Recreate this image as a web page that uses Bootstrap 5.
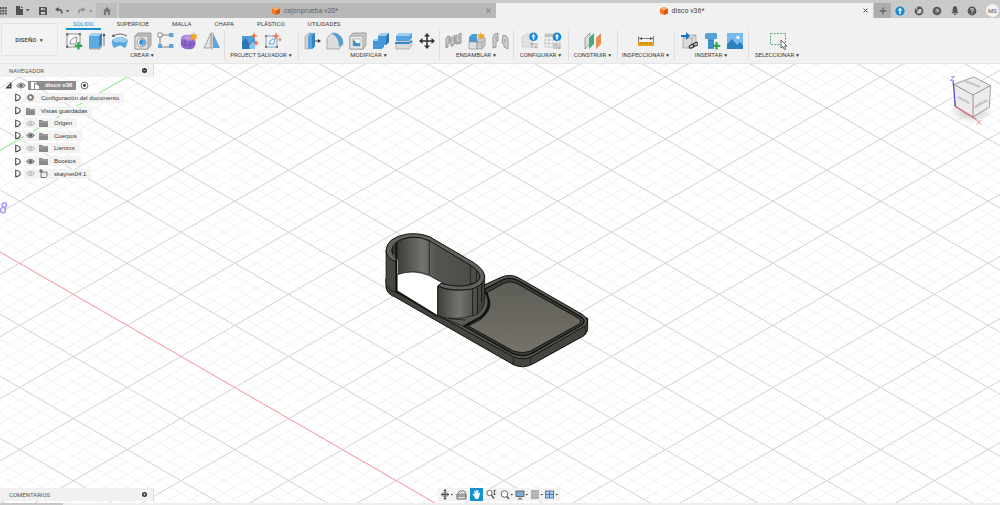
<!DOCTYPE html>
<html lang="es">
<head>
<meta charset="utf-8">
<meta name="viewport" content="width=device-width, initial-scale=1">
<title>disco v36*</title>
<link href="https://cdn.jsdelivr.net/npm/bootstrap@5.3.0/dist/css/bootstrap.min.css" rel="stylesheet">
<style>
body{font-family:Roboto,"Liberation Sans",sans-serif;font-size:6px;line-height:8px;color:#3c3c3c;background:#fff}
button{font:inherit;color:inherit;background:none;border:0;padding:0;line-height:8px}
svg{display:block;flex:none}
a{color:inherit;text-decoration:none}
.titlebar{height:18px;background:#cacaca;border-top:3px solid #c6cac9;color:#555}
.quick{width:96px;padding:0 3px 0 0}
.home-tab{width:21px;background:#bdbdbd}
.doc-tab{font-size:7px;background:#b8b8b8;color:#666;padding:0 5px}
.doc-tab.current{background:#f1f1f1;color:#444}
.docs{margin-left:2px}
.plus-tab{width:17px;background:#adadad;margin-left:1px}
.status{width:109px;padding:0 1px 0 4px}
.avatar{width:13px;height:13px;background:#f3f3f3;border-radius:50%;font-size:6px;line-height:13px;text-align:center}
.ribbon{background:#f1f1f1;height:46px;border-bottom:1px solid #e6e6e6}
.workspace{width:57px;height:33px;margin:5px 0 0 1px;border:1px solid #e2e2e2;border-radius:2px;background:#f3f3f3;font-weight:500}
.caret{font-size:5px;padding-left:1px}
.modes{height:12px;margin-left:8px}
.modes a{height:12px;padding:2px 7px 0;margin-right:9px}
.modes a.on{color:#1492d0;border-bottom:2px solid #1492d0}
.tool-group{border-right:1px solid #dedede;height:30px;padding-top:2px}
.tool-group:last-child{border:0}
.tool-row{padding-left:3px}
.w-crear{width:164px}.w-mod{width:141px}.w-trio{width:74px}.w-duo{width:55px}.w-uno{width:49px}.w-insp{width:57px}
.tools{gap:5px}
.tools svg{width:18px;height:18px}
.group-label{margin-top:1px}
.scene svg.model{position:absolute;inset:0;width:100%;height:100%}
.panel-bar{width:154px;height:13px;background:#f1f1f1;border-right:1px solid #ddd;color:#555;padding:0 6px 0 9px}
.comments{margin-bottom:2px}
.tree{height:101px;margin:2px 0 0;font-family:"Liberation Sans",Arial,sans-serif}
.tree li{flex:1;padding-left:14px}
.tree li:first-child{padding-left:4px}
.item-name{background:#f3f3f3;padding:1px 5px 1px 4px;color:#333}
.item-icons{background:#f3f3f3;height:10px;padding:0 2px;gap:4px;margin-left:2px}
.root-name{background:#8d8d8d;color:#fff;font-weight:700;padding:0 4px 0 2px;gap:5px;height:9px;margin-left:-2px}
.navtools{background:#f3f3f3;height:13px;left:50%;bottom:2px;margin-left:-62px;gap:2px;padding:0 2px}
.navtools .on{background:#1492d0}
.navtools svg{width:13px;height:13px}
.timeline{height:2px;background:#efefef}
.timeline div{width:63px;height:2px;background:#c8c8c8}
</style>
</head>
<body class="d-flex flex-column vh-100 overflow-hidden">
<header>
<div class="titlebar d-flex align-items-stretch">
  <div class="quick d-flex align-items-center justify-content-between">
    <button aria-label="Panel de datos"><svg width="7" height="9" viewBox="0 0 7 9" fill="#555"><path d="M0 1h1.6v2H0zM2.3 1h2v2h-2zM5 1h1.7v2H5zM0 3.7h1.6v2H0zM2.3 3.7h2v2h-2zM5 3.7h1.7v2H5zM0 6.4h1.6v2H0zM2.3 6.4h2v2h-2zM5 6.4h1.7v2H5z"/></svg></button>
    <button aria-label="Archivo"><svg width="15" height="9" viewBox="0 0 15 9" fill="#505050"><path d="M1 0h4v3h3v6H1zM6 0l2 2H6zM11 3h3.4l-1.7 2.4z"/></svg></button>
    <button aria-label="Guardar"><svg width="8" height="8" viewBox="0 0 8 8"><path d="M0 0h7l1 1v7H0z" fill="#555"/><path d="M2 1h4v2H2zM2 5h4v2.3H2z" fill="#ccc"/><path d="M4.4 1h1v1.6h-1z" fill="#555"/></svg></button>
    <button aria-label="Deshacer"><svg width="15" height="8" viewBox="0 0 15 8"><path d="M3.5 0v5L0 2.6z" fill="#555"/><path d="M3 2.6q4-.4 4 4" fill="none" stroke="#555" stroke-width="1.5"/><path d="M11 3h3.4l-1.7 2.4z" fill="#555"/></svg></button>
    <button aria-label="Rehacer"><svg width="15" height="8" viewBox="0 0 15 8"><path d="M4 0v5l3.5-2.4z" fill="#909090"/><path d="M4.500 2.600q-4-.4-4 4" fill="none" stroke="#909090" stroke-width="1.500"/><path d="M11 3h3.400l-1.700 2.400z" fill="#909090"/></svg></button>
  </div>
  <button class="home-tab d-flex align-items-center justify-content-center" aria-label="Inicio"><svg width="8" height="8" viewBox="0 0 8 8" fill="#777"><path d="M4 0l4 4H7v4H5V5H3v3H1V4H0z"/></svg></button>
  <div class="docs d-flex flex-fill">
    <div class="doc-tab d-flex align-items-center flex-fill w-50">
      <a href="#" class="d-flex flex-fill justify-content-center align-items-center"><svg class="me-1" width="8" height="8" viewBox="0 0 8 8"><path d="M4 0l4 1.800v4.400L4 8 0 6.200V1.800z" fill="#ef7723"/><path d="M4 0l4 1.800-4 1.800L0 1.800z" fill="#ffab6b"/><path d="M4 3.600l4-1.800v4.400L4 8z" fill="#d65b10"/></svg>cajonprueba v20*</a><button aria-label="Cerrar cajonprueba"><svg width="5" height="5" viewBox="0 0 5 5"><path d="M.5.500l4 4m0-4l-4 4" stroke="#666" stroke-width=".9"/></svg></button>
    </div>
    <div class="doc-tab current d-flex align-items-center flex-fill w-50">
      <a href="#" class="d-flex flex-fill justify-content-center align-items-center"><svg class="me-1" width="8" height="8" viewBox="0 0 8 8"><path d="M4 0l4 1.800v4.400L4 8 0 6.200V1.800z" fill="#ef7723"/><path d="M4 0l4 1.800-4 1.800L0 1.800z" fill="#ffab6b"/><path d="M4 3.600l4-1.800v4.400L4 8z" fill="#d65b10"/></svg>disco v36*</a><button aria-label="Cerrar disco"><svg width="5" height="5" viewBox="0 0 5 5"><path d="M.5.500l4 4m0-4l-4 4" stroke="#444" stroke-width=".9"/></svg></button>
    </div>
  </div>
  <button class="plus-tab d-flex align-items-center justify-content-center" aria-label="Nuevo diseño"><svg width="8" height="8" viewBox="0 0 8 8"><path d="M4 .5v7M.5 4h7" stroke="#666" stroke-width="1.400"/></svg></button>
  <div class="status d-flex align-items-center justify-content-between">
    <button aria-label="Actualizaciones"><svg width="10" height="10" viewBox="0 0 10 10"><circle cx="5" cy="5" r="4.600" fill="#1287dc"/><path d="M5 1.700l2.500 2.800H5.700v3.600H4.300V4.500H2.500z" fill="#fff"/></svg></button>
    <button aria-label="Extensiones"><svg width="10" height="10" viewBox="0 0 10 10"><circle cx="5" cy="5" r="4.400" fill="#555"/><path d="M3 5.500L5 3h2.500v3L6 7.500H3z" fill="#ccc"/><path d="M2.800 1v3" stroke="#ccc"/></svg></button>
    <button aria-label="Trabajos"><svg width="10" height="10" viewBox="0 0 10 10"><circle cx="5" cy="5" r="4.300" fill="#555"/><circle cx="5" cy="5" r="2.500" fill="#777"/><path d="M5 2.600V5h2" stroke="#ddd" fill="none"/></svg></button>
    <button aria-label="Notificaciones"><svg width="8" height="9" viewBox="0 0 8 9" fill="#555"><path d="M4 0q2.400.5 2.400 3.400V6L8 7.300H0L1.600 6V3.400Q1.600.5 4 0zM3 8h2v1H3z"/></svg></button>
    <button aria-label="Ayuda"><svg width="10" height="10" viewBox="0 0 10 10"><circle cx="5" cy="5" r="4.400" fill="#555"/><path d="M3.600 4q0-1.500 1.400-1.500T6.400 3.800Q6.400 4.600 5 5.200V6M5 6.700v1" fill="none" stroke="#ddd" stroke-width="1.100"/></svg></button>
    <button class="avatar">MS</button>
  </div>
</div>
<div class="ribbon d-flex">
  <button class="workspace">DISEÑO <span class="caret">▼</span></button>
  <div class="d-flex flex-column">
    <nav class="modes d-flex" aria-label="Modos">
      <a href="#" class="on">SOLIDO</a><a href="#">SUPERFICIE</a><a href="#">MALLA</a><a href="#">CHAPA</a><a href="#">PLÁSTICO</a><a href="#">UTILIDADES</a>
    </nav>
    <div class="tool-row d-flex">
      <div class="tool-group w-crear d-flex flex-column align-items-center">
        <div class="tools d-flex">
          <button aria-label="Crear boceto"><svg viewBox="0 0 18 18"><path d="M2 2h13v13H2zM5 12Q5 6 12 5l-1 7z" fill="#f8f8f8" stroke="#666" stroke-width=".7"/><path d="M1 1h2.500v2.500H1zM13.500 1H16v2.500h-2.500zM1 13.500h2.500V16H1z" fill="#777"/><path d="M13.500 10v7.500M9.800 13.800h7.500" stroke="#2ea84a" stroke-width="2.200"/></svg></button>
          <button aria-label="Extrusión"><svg viewBox="0 0 18 18"><path d="M1 4l3-3h10v12l-3 3H1z" fill="#61a9e1"/><path d="M1 4l3-3h10l-3 3z" fill="#a3d2f5"/><path d="M11 4l3-3v12l-3 3z" fill="#3985c2"/><path d="M1 16h10l3-3v2l-2 2.500H1z" fill="#aaa"/><path d="M16 14V3" stroke="#555" stroke-width=".8"/><path d="M14.500 4L16 1l1.500 3z" fill="#444"/></svg></button>
          <button aria-label="Revolución"><svg viewBox="0 0 18 18"><path d="M1 8q8-6 16 0l-2 7q-2 2-4-1-2-1-4 0l-4 2q-2-2-2-8z" fill="#57a5df"/><path d="M1 8q8-6 16 0l-4 3q-4-2-8 0z" fill="#9acdf1"/><path d="M2 4q7-4 14 0" fill="none" stroke="#555" stroke-width=".9"/><path d="M1 5l1-3 2 2.500z" fill="#444"/></svg></button>
          <button aria-label="Agujero"><svg viewBox="0 0 18 18"><path d="M1 4l3-3h13v12l-3 4H1z" fill="#bfbfbf" stroke="#777" stroke-width=".6"/><path d="M1 4h13v13H1z" fill="#dedede" stroke="#888" stroke-width=".6"/><circle cx="7.500" cy="10.500" r="4.300" fill="#fff" stroke="#777" stroke-width=".7"/><circle cx="8.500" cy="10.500" r="3.200" fill="#65ace2"/><path d="M8.500 7.300v3.200L6.200 12.800A3.200 3.200 0 018.500 7.300z" fill="#3c8ccc"/></svg></button>
          <button aria-label="Patrón"><svg viewBox="0 0 18 18"><path d="M3 3h12M3 3v12h12" fill="none" stroke="#666" stroke-width=".8"/><path d="M1 1h4v4H1z" fill="#fff" stroke="#777" stroke-width=".8"/><path d="M12 1h4.500v4H12zM1 12h4v4H1zM12 12h4.500v4H12z" fill="#5ba6de"/></svg></button>
          <button aria-label="Forma libre"><svg viewBox="0 0 18 18"><path d="M1 8q0-4 4-5 7-1 10 3 2 9-3 11-6 1-9-1-3-2-2-8z" fill="#8f67cc"/><path d="M1.500 7l4-4q6 0 9 3l-4 3z" fill="#b897e8"/><path d="M10 9v8M5 7v8M1 11q6 4 14 0" stroke="#6b45a9" stroke-width=".6" fill="none"/><path d="M13.500 0l1 2.700L17.500 2 16 4.500l2 1.800-2.900.3-.8 2.900-1.500-2.600-3 .3 1.900-2.400L10 2l2.700.5z" fill="#f1a51c"/></svg></button>
          <button aria-label="Simetría"><svg viewBox="0 0 18 18"><path d="M8 1v15H1z" fill="#e2e2e2" stroke="#777" stroke-width=".6"/><path d="M10 1v15h7z" fill="#5aa7e0"/><path d="M9 0v18" stroke="#777" stroke-width=".6"/></svg></button>
        </div>
        <button class="group-label">CREAR<span class="caret">▼</span></button>
      </div>
      <div class="tool-group w-trio d-flex flex-column align-items-center">
        <div class="tools d-flex">
          <button aria-label="Salvador imagen"><svg viewBox="0 0 18 18"><path d="M1 4h13v13H1z" fill="#4a9ddb"/><path d="M1 10l4-4 6 11H1z" fill="#2a77b5"/><path d="M8 14l4-4 2 2v5H9z" fill="#8bc6ee"/><path d="M13 0l1 3 3 1-3 1-1 3-1-3-3-1 3-1zM15 8l1 2 2 1-2 1-1 2-1-2-2-1 2-1z" fill="#f1734e"/></svg></button>
          <button aria-label="Salvador boceto"><svg viewBox="0 0 18 18"><path d="M2 4h11v11H2zM5 12q0-4 6-6l-1 6z" fill="none" stroke="#5195cd" stroke-width=".8"/><path d="M1 3h2v2H1zM1 14h2v2H1zM12 14h2v2h-2z" fill="#777"/><path d="M12 0l1 3 3 1-3 1-1 3-1-3-3-1 3-1zM16 5l.6 2 1.400.7-1.400.8L16 10l-.7-1.500-1.500-.8 1.500-.7z" fill="#f1734e"/></svg></button>
        </div>
        <button class="group-label">PROJECT SALVADOR<span class="caret">▼</span></button>
      </div>
      <div class="tool-group w-mod d-flex flex-column align-items-center">
        <div class="tools d-flex">
          <button aria-label="Pulsar/tirar"><svg viewBox="0 0 18 18"><path d="M2 4l4-3h2v14l-3 2H2z" fill="#d4d4d4" stroke="#888" stroke-width=".5"/><path d="M5 4l3-3h4v13l-3 3H5z" fill="#57a5df"/><path d="M9 4l3-3v13l-3 3z" fill="#3582bd"/><path d="M12 9h4" stroke="#444"/><path d="M15 7l3 2-3 2z" fill="#333"/></svg></button>
          <button aria-label="Empalme"><svg viewBox="0 0 18 18"><path d="M1 6l5-5h3q8 2 8 11l-4 5H1z" fill="#ddd" stroke="#888" stroke-width=".6"/><path d="M6 2l3-1q8 2 8 11l-4 3Q13 5 6 2z" fill="#519fd9"/></svg></button>
          <button aria-label="Vaciado"><svg viewBox="0 0 18 18"><path d="M1 4l3-3h13v12l-3 4H1z" fill="#cacaca" stroke="#777" stroke-width=".6"/><path d="M1 4h13v13H1z" fill="#e6e6e6" stroke="#888" stroke-width=".6"/><path d="M4 7h7v7H4z" fill="#fff" stroke="#888" stroke-width=".5"/><path d="M4 7l3 3v1h4v3H4z" fill="#4295d5"/></svg></button>
          <button aria-label="Combinar"><svg viewBox="0 0 18 18"><path d="M6 4l3-3h8v9l-3 3h-2v2l-2 2H1V9l2-2h3z" fill="#4697d5"/><path d="M6 4l3-3h8l-3 3zM1 9l2-2h3v2z" fill="#9ccff3"/><path d="M14 4l3-3v9l-3 3z" fill="#3079b4"/></svg></button>
          <button aria-label="Dividir cuerpo"><svg viewBox="0 0 18 18"><path d="M1 4l3-3h13v5l-3 3H1z" fill="#55a4df"/><path d="M1 4l3-3h13l-3 3z" fill="#9ccff3"/><path d="M1 11l3-2h13v4l-3 4H1z" fill="#dadada" stroke="#888" stroke-width=".5"/><path d="M0 10h14l3-2v2l-3 2H0z" fill="#318acb"/></svg></button>
          <button aria-label="Mover"><svg viewBox="0 0 18 18"><path d="M9 3v12M3 9h12" stroke="#333" stroke-width="1.500"/><path d="M9 1l3 3.500H6zM9 17l3-3.500H6zM1 9l3.500-3v6zM17 9l-3.500-3v6z" fill="#333"/></svg></button>
        </div>
        <button class="group-label">MODIFICAR<span class="caret">▼</span></button>
      </div>
      <div class="tool-group w-trio d-flex flex-column align-items-center">
        <div class="tools d-flex">
          <button aria-label="Nuevo componente"><svg viewBox="0 0 18 18"><g fill="#cecece" stroke="#777" stroke-width=".7"><path d="M1 16V7q0-3 4-3v7H3v4zM6 14V6l4-3v9H8v2zM11 12V4l5-3v10l-2 1v-3l-1 1v2z"/><path d="M4 6v3M9 6v4M14 4v4"/></g></svg></button>
          <button aria-label="Unión"><svg viewBox="0 0 18 18"><path d="M1 5l3-3h5v14H1z" fill="#4b9bd6"/><path d="M1 10h8v7H1z" fill="#e1e1e1" stroke="#888" stroke-width=".6"/><path d="M9 8l3-2h5v8l-3 3H9z" fill="#ccc" stroke="#888" stroke-width=".6"/><path d="M9 10h5v7M14 10l3-2" fill="none" stroke="#888" stroke-width=".6"/><path d="M13 0l1 2.400L17 2l-1.500 2L17 6l-2.500-.2L13 8l-1-2.400L9 6l1.600-2L9 2l3 .4z" fill="#f0a51f"/></svg></button>
          <button aria-label="Unión según construcción"><svg viewBox="0 0 18 18"><path d="M2 16V5q1-4 5-4v8H5v6zM17 17V7q-1-4-5-4l-1 8 2 1v3z" fill="#d3d3d3" stroke="#777" stroke-width=".7"/><path d="M5 4v4M14 7v4" stroke="#888" stroke-width=".8"/></svg></button>
        </div>
        <button class="group-label">ENSAMBLAR<span class="caret">▼</span></button>
      </div>
      <div class="tool-group w-duo d-flex flex-column align-items-center">
        <div class="tools d-flex">
          <button aria-label="Configurar diseño"><svg viewBox="0 0 18 18"><path d="M1 5l4-3h6v13H1z" fill="#e2e2e2" stroke="#c4c4c4" stroke-width=".6"/><path d="M9 12h8M10 15h7M11 10.500v3M15 13.500v3" stroke="#999" stroke-width=".8"/><circle cx="12.500" cy="4.700" r="4.300" fill="#1686d7"/><path d="M12.500 1.700l2.200 2.700h-1.400v3h-1.600v-3h-1.400z" fill="#fff"/></svg></button>
          <button aria-label="Tabla de configuración"><svg viewBox="0 0 18 18"><path d="M1 2h15v13H1z" fill="#f3f3f3" stroke="#bbb" stroke-width=".7"/><path d="M1 2h15v3H1z" fill="#c1c1c1"/><path d="M1 8h15M1 11.500h15M5 5v10M9 5v10M12.500 5v10" stroke="#bbb" stroke-width=".6"/><path d="M9 13h8M11 11.500v3M9 16h8M15 14.500v3" stroke="#999" stroke-width=".8"/><circle cx="13" cy="4.700" r="4.300" fill="#1686d7"/><path d="M13 1.700l2.200 2.700h-1.400v3h-1.600v-3h-1.400z" fill="#fff"/></svg></button>
        </div>
        <button class="group-label">CONFIGURAR<span class="caret">▼</span></button>
      </div>
      <div class="tool-group w-uno d-flex flex-column align-items-center">
        <div class="tools d-flex"><button aria-label="Plano de desfase"><svg viewBox="0 0 18 18"><path d="M1 6l5-5v11l-5 5z" fill="#ddd" stroke="#777" stroke-width=".6"/><path d="M5 6l5-5v11l-5 5z" fill="#3eb276"/><path d="M12 6l5-5v11l-5 5z" fill="#e58f52"/></svg></button></div>
        <button class="group-label">CONSTRUIR<span class="caret">▼</span></button>
      </div>
      <div class="tool-group w-insp d-flex flex-column align-items-center">
        <div class="tools d-flex"><button aria-label="Medir"><svg viewBox="0 0 18 18"><path d="M1.500 4v6M16.500 4v6M2 6.500h14" stroke="#666" stroke-width=".8"/><path d="M2 6.500l3-1.500v3zM16 6.500L13 5v3z" fill="#555"/><path d="M1 10h16v4H1z" fill="#e9a21c"/><path d="M4 10v2M7 10v2M10 10v2M13 10v2" stroke="#8c5b08" stroke-width=".6"/></svg></button></div>
        <button class="group-label">INSPECCIONAR<span class="caret">▼</span></button>
      </div>
      <div class="tool-group w-trio d-flex flex-column align-items-center">
        <div class="tools d-flex">
          <button aria-label="Insertar derivado"><svg viewBox="0 0 18 18"><path d="M3 6l4-3h9v10l-3 3H3z" fill="#dcdcdc" stroke="#888" stroke-width=".6"/><path d="M3 6h9v10M12 6l4-3" fill="none" stroke="#999" stroke-width=".6"/><path d="M1 4h6" stroke="#1976bd" stroke-width="2"/><path d="M6 0l4 4-4 4z" fill="#1976bd"/><g fill="none" stroke="#333" stroke-width="1.200"><rect x="9" y="13" width="5" height="3" rx="1.500" transform="rotate(-25 11 14)"/><rect x="13" y="11" width="5" height="3" rx="1.500" transform="rotate(-25 15 12)"/></g></svg></button>
          <button aria-label="Insertar elemento"><svg viewBox="0 0 18 18"><path d="M2 2l2-1h9l1 1v5H2z" fill="#56a3dc"/><path d="M5 7h6v10H5z" fill="#4b98d3"/><path d="M5 9h6M5 12h6M5 15h6" stroke="#2471ad" stroke-width=".8"/><path d="M13.500 10v7.500M9.800 13.800h7.500" stroke="#2ea84a" stroke-width="2.200"/></svg></button>
          <button aria-label="Insertar imagen"><svg viewBox="0 0 18 18"><path d="M1 1h16v16H1z" fill="#78bbec"/><circle cx="12" cy="5.500" r="1.700" fill="#fff"/><path d="M1 12l5-5 5 6 3-3 3 3v4H1z" fill="#2d7fbf"/></svg></button>
        </div>
        <button class="group-label">INSERTAR<span class="caret">▼</span></button>
      </div>
      <div class="tool-group w-insp d-flex flex-column align-items-center">
        <div class="tools d-flex"><button aria-label="Seleccionar"><svg viewBox="0 0 18 18"><path d="M1.500 1.500h15v11h-15z" fill="none" stroke="#39a66b" stroke-dasharray="2 1.200" stroke-width=".9"/><path d="M12 8v8l2-1.500 1.300 3 1.500-.8-1.300-2.700H18z" fill="#fff" stroke="#444" stroke-width=".8"/></svg></button></div>
        <button class="group-label">SELECCIONAR<span class="caret">▼</span></button>
      </div>
    </div>
  </div>
</div>
</header>

<main class="scene position-relative flex-fill d-flex flex-column justify-content-between">
<svg class="model" viewBox="0 64 1000 439" preserveAspectRatio="xMidYMid slice">
  <defs>
    <linearGradient id="wall" x2="1" y2="0"><stop offset="0" stop-color="#3e3e3a"/><stop offset=".45" stop-color="#75746e"/><stop offset="1" stop-color="#3b3b37"/></linearGradient>
    <linearGradient id="inner" x2="1" y2="0"><stop offset="0" stop-color="#30302d"/><stop offset=".35" stop-color="#74736d"/><stop offset=".5" stop-color="#555550"/><stop offset="1" stop-color="#4b4b46"/></linearGradient>
    <linearGradient id="floor" x2="0" y2="1"><stop offset="0" stop-color="#5d5c56"/><stop offset="1" stop-color="#75736a"/></linearGradient>
    <radialGradient id="shade"><stop offset="0" stop-color="#999" stop-opacity=".6"/><stop offset="1" stop-color="#999" stop-opacity="0"/></radialGradient>
  </defs>
  <path id="minor" fill="none" stroke="#f1f1f1" stroke-width=".9"/>
  <path id="major" fill="none" stroke="#d0d0d0" stroke-width=".9"/>
  <path d="M0 252l435 251" stroke="#ff9fa6" stroke-width="1"/>
  <path d="M0 150.300L127 77" stroke="#93f093" stroke-width="1"/>
  <g fill="none" stroke="#a78df0" stroke-width="1.300"><circle cx="4.300" cy="205" r="2.300"/><circle cx="3" cy="210.300" r="2.600"/></g>
  <g transform="translate(370 220) scale(.3333)" stroke="#111" stroke-width="3" stroke-linejoin="round">
    <path d="M48 175V200Q50 222 75 231L430 434Q460 448 490 431L642 347Q653 338 653 325V295L300 180z" fill="#45453f"/>
    <path d="M48 178Q50 205 75 215L430 410Q460 423 487 409L644 319Q662 303 640 285L445 173Q418 160 393 172L200 260z" fill="#5a5953"/>
    <path d="M430 411V434M482 412V433M646 318V344" fill="none" stroke-width="2"/>
    <path d="M281 318L430 402Q460 413 485 401L636 315Q650 303 634 291L443 181Q418 170 397 180L343 208Q372 260 330 292z" fill="#3d3d38" stroke-width="4"/>
    <path d="M294 318L432 394Q458 403 480 394L626 313Q638 304 626 295L438 189Q418 181 401 190L352 217Q366 265 334 297z" fill="url(#floor)" stroke-width="3"/>
    <path d="M338 210Q362 232 358 258Q352 285 322 297L281 320" fill="none" stroke-width="5"/>
    <path d="M65 95Q70 58 125 50Q155 49 178 61L300 132Q332 154 330 178Q300 204 240 202L178 166Q130 145 85 165V120z" fill="url(#inner)" stroke-width="2"/>
    <path d="M81 164Q130 147 178 167L220 190L203 200V289L81 214z" fill="#fff" stroke-width="2"/>
    <path d="M81 214L203 289" stroke-width="5"/>
    <path d="M178 62V164M301 134V193M319 150V190" fill="none" stroke-width="2"/>
    <path d="M48 92V190Q50 208 79 218V117Q62 106 65 90z" fill="#474742" stroke-width="2"/>
    <path d="M79 60V218" stroke-width="6"/>
    <path d="M203 200Q275 225 325 192L344 165V240Q342 272 315 285Q258 304 203 288z" fill="url(#wall)" stroke-width="2"/>
    <path d="M48 92Q50 52 112 42Q150 38 180 51L310 127Q345 150 344 172Q340 200 300 208Q245 216 203 198L213 190Q265 205 306 193Q331 184 330 168Q325 149 300 135L178 62Q150 49 120 52Q70 58 65 90Q65 106 80 118L75 124Q50 115 48 92z" fill="#62615b" stroke-width="3"/>
    <path d="M308 208V287M323 204V283M335 190V246" fill="none" stroke-width="2.500"/>
    <path d="M203 289Q220 294 280 318M235 296L285 300" fill="none" stroke-width="2"/>
  </g>
  <g stroke-linejoin="round">
    <ellipse cx="971" cy="112" rx="22" ry="11" fill="url(#shade)"/>
    <path d="M954 84.500l19.500-7.500 17 8.500-1 21.500-16.500 10-18.500-11z" fill="#ececec" stroke="#888" stroke-width=".8"/>
    <path d="M954 84.500l19 10.500 17.500-9.500M973 95v22" fill="none" stroke="#888" stroke-width=".9"/>
    <path d="M955.500 106.500L953 81" stroke="#5555e8" stroke-width="1.200"/>
    <path d="M955.500 106.500l21 13" stroke="#e06470" stroke-width="1.300"/>
    <g font-size="3" font-weight="700" fill="#999" font-family="Liberation Sans, sans-serif"><text x="965" y="82" transform="rotate(22 965 82)">SUPERIOR</text><text x="957" y="98" transform="rotate(27 957 98)">FRONTAL</text><text x="975" y="108" transform="rotate(-29 975 108)">DERECHA</text></g>
    <g font-size="8" font-family="Liberation Sans, sans-serif"><text x="950" y="81" fill="#7575ee">Z</text><text x="976" y="125" fill="#ee7580">X</text></g>
  </g>
</svg>

<section class="position-relative" aria-label="Navegador">
  <div class="panel-bar d-flex align-items-center justify-content-between"><span>NAVEGADOR</span><button aria-label="Ocultar"><svg width="5" height="5" viewBox="0 0 5 5"><circle cx="2.500" cy="2.500" r="2.500" fill="#333"/><path d="M1.300 2.500h2.400" stroke="#ddd" stroke-width=".7"/></svg></button></div>
  <ul class="tree list-unstyled d-flex flex-column" id="tree">
    <li class="d-flex align-items-center gap-1"><svg width="8" height="8" viewBox="0 0 8 8"><path d="M7.500 1v6.500H1z" fill="#444"/><path d="M6 4.500V6H4.500z" fill="#ddd"/></svg><svg width="10" height="7" viewBox="0 0 10 7"><path d="M.5 3.500q4.500-5 9 0-4.500 5-9 0z" fill="#bbb" stroke="#888"/><circle cx="5" cy="3.500" r="1.500" fill="#666"/></svg><span class="root-name d-flex align-items-center"><svg width="10" height="9" viewBox="0 0 10 9"><path d="M1 1h3v7H1zM5 4h2.500L9 5.500V8H5z" fill="#fff"/><path d="M4 1.500h2V4" stroke="#fff" stroke-width=".8" fill="none"/></svg>disco v36</span><svg width="9" height="9" viewBox="0 0 9 9"><circle cx="4.500" cy="4.500" r="3.400" fill="#fff" stroke="#444" stroke-width=".8"/><circle cx="4.500" cy="4.500" r="1.400" fill="#333"/></svg></li>
  </ul>
</section>

<section class="panel-bar comments position-relative d-flex align-items-center justify-content-between" aria-label="Comentarios"><span>COMENTARIOS</span><button aria-label="Añadir comentario"><svg width="5" height="5" viewBox="0 0 5 5"><circle cx="2.500" cy="2.500" r="2.500" fill="#333"/><path d="M1.300 2.500h2.400M2.500 1.300v2.400" stroke="#ddd" stroke-width=".7"/></svg></button></section>

<div class="navtools position-absolute d-flex align-items-center">
  <button aria-label="Órbita"><svg viewBox="0 0 13 13"><path d="M5 2v9M1 6.500h8" stroke="#444"/><ellipse cx="5" cy="6.500" rx="3.500" ry="1.800" fill="none" stroke="#555" stroke-width=".8"/><path d="M5 1l1.500 2h-3zM5 12l1.500-2h-3zM10.800 6h2.200l-1.100 1.500z" fill="#333"/></svg></button>
  <button aria-label="Mirar a"><svg viewBox="0 0 13 13"><path d="M2 6h9v5H2z" fill="#ddd" stroke="#666"/><path d="M3 5l2-2h4l2 2M2 8h9" fill="none" stroke="#666"/></svg></button>
  <button class="on" aria-label="Encuadre"><svg viewBox="0 0 13 13"><path d="M4 8L2.500 6l1-.5L5 6.700 4 3l1-.3.8 2.500V2h1v3l.8-2.700 1 .3L8.200 6l1-1.500 1 .4L9 9l-1 2H5.500z" fill="#fff"/></svg></button>
  <button aria-label="Zoom"><svg viewBox="0 0 13 13"><circle cx="4.500" cy="5" r="2.600" fill="#fff" stroke="#666"/><path d="M6.500 7l2.500 3.500" stroke="#555" stroke-width="1.300"/><path d="M9.500 2v5M8.200 3.300L9.500 2l1.300 1.300M8.200 5.700L9.500 7l1.300-1.300" fill="none" stroke="#444" stroke-width=".8"/></svg></button>
  <button aria-label="Ajustar"><svg viewBox="0 0 13 13"><circle cx="4.500" cy="6" r="3.300" fill="#fff" stroke="#666"/><path d="M7 8.500l2 2.500" stroke="#555" stroke-width="1.300"/><path d="M10.500 6H13l-1.200 1.500z" fill="#333"/></svg></button>
  <button aria-label="Visualización"><svg viewBox="0 0 13 13"><path d="M1 3h8v5.500H1z" fill="#79aeda" stroke="#666"/><path d="M5 8v3M2.500 11h5" stroke="#666"/><path d="M10.500 6H13l-1.200 1.500z" fill="#333"/></svg></button>
  <button aria-label="Rejilla"><svg viewBox="0 0 13 13"><path d="M1 2h8v9H1z" fill="#aaa"/><path d="M1 5h8M1 8h8M4 2v9M7 2v9" stroke="#ccc" stroke-width=".5"/><path d="M10.500 6H13l-1.200 1.500z" fill="#333"/></svg></button>
  <button aria-label="Ventanas"><svg viewBox="0 0 13 13"><path d="M0 2.500h9v8H0z" fill="#5478a0"/><path d="M1 3.500h3V6H1zM5 3.500h3V6H5zM1 7h3v2.500H1zM5 7h3v2.500H5z" fill="#a8cdec"/><path d="M10.500 6H13l-1.200 1.500z" fill="#333"/></svg></button>
</div>
</main>
<footer class="timeline"><div></div></footer>

<script src="https://cdn.jsdelivr.net/npm/bootstrap@5.3.0/dist/js/bootstrap.bundle.min.js"></script>
<script>
// Isometric ground grid: two families of parallel lines through one origin node
const cell = { width: 107.62, height: 62.1 }, node = { x: 665.3, y: 77 };
function gridPath(step) {
  const slope = cell.height / cell.width;
  let d = '';
  for (let n = -100; n <= 100; n++) {
    const down = node.y - slope * node.x + n * step, up = node.y + slope * node.x + n * step;
    d += `M0 ${down}L1000 ${down + slope * 1000}M0 ${up}L1000 ${up - slope * 1000}`;
  }
  return d;
}
document.getElementById('minor').setAttribute('d', gridPath(cell.height / 5));
document.getElementById('major').setAttribute('d', gridPath(cell.height));

// Browser tree rows: name, kind, visible
const arrow = '<svg width="8" height="9" viewBox="0 0 7 8"><path d="M1.500 1q4 1 4 3t-4 3z" fill="#fff" stroke="#333" stroke-width=".9"/></svg>';
const eye = on => `<svg width="9" height="7" viewBox="0 0 10 7"><path d="M.5 3.500q4.500-5 9 0-4.500 5-9 0z" fill="${on ? '#aaa' : '#eee'}" stroke="${on ? '#777' : '#aaa'}"/><circle cx="5" cy="3.500" r="1.500" fill="${on ? '#555' : '#bbb'}"/></svg>`;
const icons = {
  gear: '<svg width="9" height="9" viewBox="0 0 9 9"><circle cx="4.500" cy="4.500" r="2.200" fill="none" stroke="#777" stroke-width="1.500"/><circle cx="4.500" cy="4.500" r="3.300" fill="none" stroke="#777" stroke-dasharray="1.300 1.300"/></svg>',
  folder: '<svg width="9" height="8" viewBox="0 0 9 8"><path d="M0 1h3l1 1h5v6H0z" fill="#8a8a8a"/><path d="M0 3h9" stroke="#bbb" stroke-width=".6"/></svg>',
  part: '<svg width="9" height="9" viewBox="0 0 9 9"><path d="M2 4l1.500-1H8v4L6.500 8.500H2z" fill="#eee" stroke="#666" stroke-width=".9"/><path d="M2 0v4M0 2h4" stroke="#555"/></svg>'
};
const rows = [['Configuración del documento', 'gear', null], ['Vistas guardadas', 'folder', null], ['Origen', 'folder', false], ['Cuerpos', 'folder', true], ['Lienzos', 'folder', false], ['Bocetos', 'folder', true], ['skaynet04:1', 'part', false]];
const tree = document.getElementById('tree');
for (const [name, kind, visible] of rows) {
  tree.insertAdjacentHTML('beforeend', `<li class="d-flex align-items-center">${arrow}<span class="item-icons d-flex align-items-center">${visible === null ? '' : eye(visible)}${icons[kind]}</span><span class="item-name">${name}</span></li>`);
}
</script>
</body>
</html>
